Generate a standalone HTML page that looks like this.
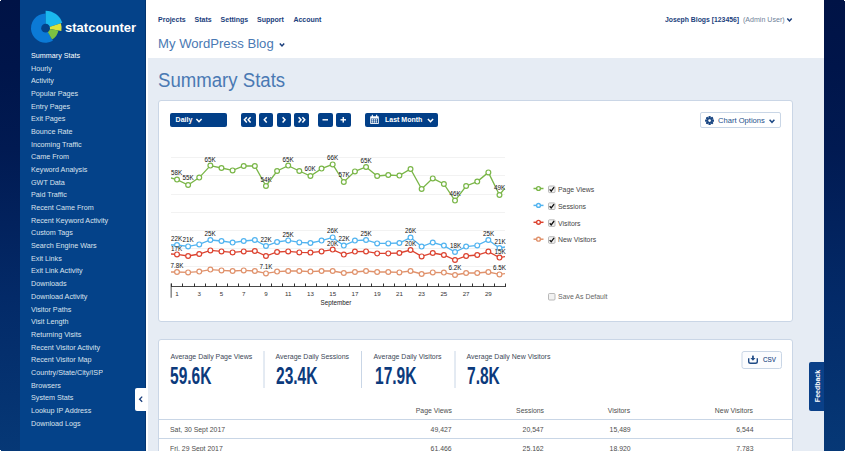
<!DOCTYPE html><html><head><meta charset="utf-8"><style>
html,body{margin:0;padding:0;width:845px;height:451px;overflow:hidden;background:#e6ecf4;}
body{position:relative;font-family:"Liberation Sans",sans-serif;}
.t{position:absolute;white-space:nowrap;font-family:"Liberation Sans",sans-serif;}
svg{overflow:visible}
</style></head><body>
<div style="position:absolute;left:0px;top:0px;width:20px;height:451px;background:linear-gradient(#001346 0%,#00154a 15%,#011a52 33%,#032a68 66%,#063876 100%);"></div>
<div style="position:absolute;left:824px;top:0px;width:21px;height:451px;background:linear-gradient(#001346 0%,#00154a 15%,#011a52 33%,#032a68 66%,#063876 100%);"></div>
<div style="position:absolute;left:20px;top:0px;width:126px;height:451px;background:#044289;"></div>
<div style="position:absolute;left:145px;top:0px;width:1px;height:451px;background:#03346f;"></div>
<div style="position:absolute;left:146px;top:0px;width:2px;height:451px;background:#ffffff;"></div>
<div style="position:absolute;left:147px;top:0px;width:677px;height:58px;background:#fff;"></div>
<div style="position:absolute;left:148px;top:58px;width:676px;height:393px;background:#e6ecf4;"></div>
<div class="t" style="left:31px;top:52.10px;font-size:7.6px;line-height:7.6px;color:#ffffff;transform:scaleX(0.947);transform-origin:left center;">Summary Stats</div>
<div class="t" style="left:31px;top:64.77px;font-size:7.6px;line-height:7.6px;color:#dbe3ee;transform:scaleX(0.947);transform-origin:left center;">Hourly</div>
<div class="t" style="left:31px;top:77.44px;font-size:7.6px;line-height:7.6px;color:#dbe3ee;transform:scaleX(0.947);transform-origin:left center;">Activity</div>
<div class="t" style="left:31px;top:90.11px;font-size:7.6px;line-height:7.6px;color:#dbe3ee;transform:scaleX(0.947);transform-origin:left center;">Popular Pages</div>
<div class="t" style="left:31px;top:102.78px;font-size:7.6px;line-height:7.6px;color:#dbe3ee;transform:scaleX(0.947);transform-origin:left center;">Entry Pages</div>
<div class="t" style="left:31px;top:115.45px;font-size:7.6px;line-height:7.6px;color:#dbe3ee;transform:scaleX(0.947);transform-origin:left center;">Exit Pages</div>
<div class="t" style="left:31px;top:128.12px;font-size:7.6px;line-height:7.6px;color:#dbe3ee;transform:scaleX(0.947);transform-origin:left center;">Bounce Rate</div>
<div class="t" style="left:31px;top:140.79px;font-size:7.6px;line-height:7.6px;color:#dbe3ee;transform:scaleX(0.947);transform-origin:left center;">Incoming Traffic</div>
<div class="t" style="left:31px;top:153.46px;font-size:7.6px;line-height:7.6px;color:#dbe3ee;transform:scaleX(0.947);transform-origin:left center;">Came From</div>
<div class="t" style="left:31px;top:166.13px;font-size:7.6px;line-height:7.6px;color:#dbe3ee;transform:scaleX(0.947);transform-origin:left center;">Keyword Analysis</div>
<div class="t" style="left:31px;top:178.80px;font-size:7.6px;line-height:7.6px;color:#dbe3ee;transform:scaleX(0.947);transform-origin:left center;">GWT Data</div>
<div class="t" style="left:31px;top:191.47px;font-size:7.6px;line-height:7.6px;color:#dbe3ee;transform:scaleX(0.947);transform-origin:left center;">Paid Traffic</div>
<div class="t" style="left:31px;top:204.14px;font-size:7.6px;line-height:7.6px;color:#dbe3ee;transform:scaleX(0.947);transform-origin:left center;">Recent Came From</div>
<div class="t" style="left:31px;top:216.81px;font-size:7.6px;line-height:7.6px;color:#dbe3ee;transform:scaleX(0.947);transform-origin:left center;">Recent Keyword Activity</div>
<div class="t" style="left:31px;top:229.48px;font-size:7.6px;line-height:7.6px;color:#dbe3ee;transform:scaleX(0.947);transform-origin:left center;">Custom Tags</div>
<div class="t" style="left:31px;top:242.15px;font-size:7.6px;line-height:7.6px;color:#dbe3ee;transform:scaleX(0.947);transform-origin:left center;">Search Engine Wars</div>
<div class="t" style="left:31px;top:254.82px;font-size:7.6px;line-height:7.6px;color:#dbe3ee;transform:scaleX(0.947);transform-origin:left center;">Exit Links</div>
<div class="t" style="left:31px;top:267.49px;font-size:7.6px;line-height:7.6px;color:#dbe3ee;transform:scaleX(0.947);transform-origin:left center;">Exit Link Activity</div>
<div class="t" style="left:31px;top:280.16px;font-size:7.6px;line-height:7.6px;color:#dbe3ee;transform:scaleX(0.947);transform-origin:left center;">Downloads</div>
<div class="t" style="left:31px;top:292.83px;font-size:7.6px;line-height:7.6px;color:#dbe3ee;transform:scaleX(0.947);transform-origin:left center;">Download Activity</div>
<div class="t" style="left:31px;top:305.50px;font-size:7.6px;line-height:7.6px;color:#dbe3ee;transform:scaleX(0.947);transform-origin:left center;">Visitor Paths</div>
<div class="t" style="left:31px;top:318.17px;font-size:7.6px;line-height:7.6px;color:#dbe3ee;transform:scaleX(0.947);transform-origin:left center;">Visit Length</div>
<div class="t" style="left:31px;top:330.84px;font-size:7.6px;line-height:7.6px;color:#dbe3ee;transform:scaleX(0.947);transform-origin:left center;">Returning Visits</div>
<div class="t" style="left:31px;top:343.51px;font-size:7.6px;line-height:7.6px;color:#dbe3ee;transform:scaleX(0.947);transform-origin:left center;">Recent Visitor Activity</div>
<div class="t" style="left:31px;top:356.18px;font-size:7.6px;line-height:7.6px;color:#dbe3ee;transform:scaleX(0.947);transform-origin:left center;">Recent Visitor Map</div>
<div class="t" style="left:31px;top:368.85px;font-size:7.6px;line-height:7.6px;color:#dbe3ee;transform:scaleX(0.947);transform-origin:left center;">Country/State/City/ISP</div>
<div class="t" style="left:31px;top:381.52px;font-size:7.6px;line-height:7.6px;color:#dbe3ee;transform:scaleX(0.947);transform-origin:left center;">Browsers</div>
<div class="t" style="left:31px;top:394.19px;font-size:7.6px;line-height:7.6px;color:#dbe3ee;transform:scaleX(0.947);transform-origin:left center;">System Stats</div>
<div class="t" style="left:31px;top:406.86px;font-size:7.6px;line-height:7.6px;color:#dbe3ee;transform:scaleX(0.947);transform-origin:left center;">Lookup IP Address</div>
<div class="t" style="left:31px;top:419.53px;font-size:7.6px;line-height:7.6px;color:#dbe3ee;transform:scaleX(0.947);transform-origin:left center;">Download Logs</div>
<svg style="position:absolute;left:0;top:0" width="845" height="451"><path d="M45.60,28.20 L52.90,40.84 A14.6,14.6 0 1 1 45.60,13.60 Z" fill="#0b7ad6"/><path d="M45.60,28.20 L45.60,10.70 A17.5,17.5 0 0 1 62.24,22.79 Z" fill="#1ab8ee"/><path d="M45.60,28.20 L60.82,23.26 A16,16 0 0 1 61.36,30.98 Z" fill="#dce33a"/><path d="M45.60,28.20 L58.40,30.46 A13,13 0 0 1 52.10,39.46 Z" fill="#7cc142"/><circle cx="45.6" cy="28.2" r="4.4" fill="#044289"/></svg>
<div class="t" style="left:65.2px;top:20.70px;font-size:13.6px;line-height:13.6px;color:#ffffff;font-weight:bold;transform:scaleX(0.96);transform-origin:left center;">statcounter</div>
<div class="t" style="left:158px;top:15.60px;font-size:7px;line-height:7px;color:#1a3e7c;font-weight:bold;">Projects</div>
<div class="t" style="left:194.6px;top:15.60px;font-size:7px;line-height:7px;color:#1a3e7c;font-weight:bold;">Stats</div>
<div class="t" style="left:220.6px;top:15.60px;font-size:7px;line-height:7px;color:#1a3e7c;font-weight:bold;">Settings</div>
<div class="t" style="left:257px;top:15.60px;font-size:7px;line-height:7px;color:#1a3e7c;font-weight:bold;">Support</div>
<div class="t" style="left:293.4px;top:15.60px;font-size:7px;line-height:7px;color:#1a3e7c;font-weight:bold;">Account</div>
<div class="t" style="left:665.2px;top:15.80px;font-size:7.6px;line-height:7.6px;color:#1a3e7c;font-weight:bold;transform:scaleX(0.9);transform-origin:left center;">Joseph Blogs [123456]</div>
<div class="t" style="left:743px;top:16.00px;font-size:7.6px;line-height:7.6px;color:#6f7f99;transform:scaleX(0.93);transform-origin:left center;">(Admin User)</div>
<div class="t" style="left:158px;top:36.55px;font-size:13.5px;line-height:13.5px;color:#4a79b3;transform:scaleX(0.972);transform-origin:left center;">My WordPress Blog</div>
<div class="t" style="left:158px;top:70.00px;font-size:20px;line-height:20px;color:#4a79b3;transform:scaleX(0.93);transform-origin:left center;">Summary Stats</div>
<div style="position:absolute;left:158px;top:100px;width:635px;height:222px;background:#fff;border:1px solid #cad6e6;border-radius:3px;box-sizing:border-box;"></div>
<div style="position:absolute;left:158px;top:339px;width:635px;height:121px;background:#fff;border:1px solid #cad6e6;border-radius:3px;box-sizing:border-box;"></div>
<div style="position:absolute;left:170px;top:112.5px;width:57px;height:14.5px;background:#023f88;border-radius:2px;"></div>
<div style="position:absolute;left:240.5px;top:112.5px;width:15.0px;height:14.5px;background:#023f88;border-radius:2px;"></div>
<div style="position:absolute;left:258.5px;top:112.5px;width:14.5px;height:14.5px;background:#023f88;border-radius:2px;"></div>
<div style="position:absolute;left:276.5px;top:112.5px;width:14.5px;height:14.5px;background:#023f88;border-radius:2px;"></div>
<div style="position:absolute;left:294px;top:112.5px;width:15px;height:14.5px;background:#023f88;border-radius:2px;"></div>
<div style="position:absolute;left:318px;top:112.5px;width:14.5px;height:14.5px;background:#023f88;border-radius:2px;"></div>
<div style="position:absolute;left:336px;top:112.5px;width:14.5px;height:14.5px;background:#023f88;border-radius:2px;"></div>
<div style="position:absolute;left:364.5px;top:112.5px;width:73.0px;height:14.5px;background:#023f88;border-radius:2px;"></div>
<div class="t" style="left:175.6px;top:116.20px;font-size:7px;line-height:7px;color:#fff;font-weight:bold;">Daily</div>
<div class="t" style="left:385px;top:116.20px;font-size:7px;line-height:7px;color:#fff;font-weight:bold;">Last Month</div>
<div style="position:absolute;left:700px;top:112px;width:81px;height:16px;background:#fff;border:1px solid #c9d6e6;border-radius:2px;box-sizing:border-box;"></div>
<div class="t" style="left:718px;top:117.20px;font-size:7.6px;line-height:7.6px;color:#24508c;transform:scaleX(1.0);transform-origin:left center;">Chart Options</div>
<svg style="position:absolute;left:0;top:0" width="845" height="451">
<polyline points="196.4,118.95 199,121.64999999999999 201.6,118.95" fill="none" stroke="#fff" stroke-width="1.5"/>
<polyline points="427.9,118.95 430.5,121.64999999999999 433.1,118.95" fill="none" stroke="#fff" stroke-width="1.5"/>
<polyline points="769.6,119.7 772,122.3 774.4,119.7" fill="none" stroke="#1e4a85" stroke-width="1.5"/>
<polyline points="279.8,43.599999999999994 282,46.0 284.2,43.599999999999994" fill="none" stroke="#1a3e7c" stroke-width="1.5"/>
<polyline points="787.3,18.6 789.5,21.0 791.7,18.6" fill="none" stroke="#1a3e7c" stroke-width="1.5"/>
<polyline points="246.79999999999998,117.2 244.4,119.8 246.79999999999998,122.39999999999999" fill="none" stroke="#fff" stroke-width="1.5"/>
<polyline points="250.6,117.2 248.20000000000002,119.8 250.6,122.39999999999999" fill="none" stroke="#fff" stroke-width="1.5"/>
<polyline points="266.7,117.2 264.3,119.8 266.7,122.39999999999999" fill="none" stroke="#fff" stroke-width="1.5"/>
<polyline points="282.6,117.2 285.0,119.8 282.6,122.39999999999999" fill="none" stroke="#fff" stroke-width="1.5"/>
<polyline points="298.6,117.2 301.0,119.8 298.6,122.39999999999999" fill="none" stroke="#fff" stroke-width="1.5"/>
<polyline points="302.40000000000003,117.2 304.8,119.8 302.40000000000003,122.39999999999999" fill="none" stroke="#fff" stroke-width="1.5"/>
<rect x="322.5" y="119.1" width="5.5" height="1.4" fill="#fff"/>
<rect x="340.5" y="119.1" width="5.5" height="1.4" fill="#fff"/><rect x="342.55" y="117.05" width="1.4" height="5.5" fill="#fff"/>
<rect x="370.2" y="116.3" width="8.6" height="7.6" rx="0.6" fill="#fff"/><rect x="371" y="118.6" width="7" height="4.5" fill="#023f88"/><rect x="371.8" y="114.8" width="1.1" height="2.2" fill="#fff"/><rect x="376.1" y="114.8" width="1.1" height="2.2" fill="#fff"/>
<rect x="371.5" y="119.2" width="1.5" height="1.4" fill="#fff"/>
<rect x="371.5" y="121.2" width="1.5" height="1.4" fill="#fff"/>
<rect x="373.6" y="119.2" width="1.5" height="1.4" fill="#fff"/>
<rect x="373.6" y="121.2" width="1.5" height="1.4" fill="#fff"/>
<rect x="375.7" y="119.2" width="1.5" height="1.4" fill="#fff"/>
<rect x="375.7" y="121.2" width="1.5" height="1.4" fill="#fff"/>
<rect x="708.7" y="116.19999999999999" width="1.8" height="8.8" fill="#1e4a85" transform="rotate(0 709.6 120.6)"/><rect x="708.7" y="116.19999999999999" width="1.8" height="8.8" fill="#1e4a85" transform="rotate(45 709.6 120.6)"/><rect x="708.7" y="116.19999999999999" width="1.8" height="8.8" fill="#1e4a85" transform="rotate(90 709.6 120.6)"/><rect x="708.7" y="116.19999999999999" width="1.8" height="8.8" fill="#1e4a85" transform="rotate(135 709.6 120.6)"/><rect x="708.7" y="116.19999999999999" width="1.8" height="8.8" fill="#1e4a85" transform="rotate(180 709.6 120.6)"/><rect x="708.7" y="116.19999999999999" width="1.8" height="8.8" fill="#1e4a85" transform="rotate(225 709.6 120.6)"/><rect x="708.7" y="116.19999999999999" width="1.8" height="8.8" fill="#1e4a85" transform="rotate(270 709.6 120.6)"/><rect x="708.7" y="116.19999999999999" width="1.8" height="8.8" fill="#1e4a85" transform="rotate(315 709.6 120.6)"/><circle cx="709.6" cy="120.6" r="3.0" fill="#1e4a85"/><circle cx="709.6" cy="120.6" r="1.3" fill="#fff"/>
<line x1="171" y1="157.5" x2="505" y2="157.5" stroke="#f2f2f2" stroke-width="1"/>
<line x1="171" y1="175.5" x2="505" y2="175.5" stroke="#f2f2f2" stroke-width="1"/>
<line x1="171" y1="194.5" x2="505" y2="194.5" stroke="#f2f2f2" stroke-width="1"/>
<line x1="171" y1="212.5" x2="505" y2="212.5" stroke="#f2f2f2" stroke-width="1"/>
<line x1="171" y1="230.5" x2="505" y2="230.5" stroke="#f2f2f2" stroke-width="1"/>
<line x1="171" y1="248.5" x2="505" y2="248.5" stroke="#f2f2f2" stroke-width="1"/>
<line x1="171" y1="266.5" x2="505" y2="266.5" stroke="#f2f2f2" stroke-width="1"/>
<defs><clipPath id="cp"><rect x="171" y="140" width="334" height="145"/></clipPath></defs><g clip-path="url(#cp)">
<polyline points="171.00,178.00 177.00,179.60 188.12,185.00 199.24,177.60 210.36,165.60 221.48,168.00 232.60,170.40 243.72,166.00 254.84,166.00 265.96,186.00 277.08,171.00 288.20,165.60 299.32,171.00 310.44,176.00 321.56,168.60 332.68,164.40 343.80,182.00 354.92,171.40 366.04,167.00 377.16,176.00 388.28,175.00 399.40,175.60 410.52,169.00 421.64,189.00 432.76,178.40 443.88,184.00 455.00,200.60 466.12,186.00 477.24,181.60 488.36,172.40 499.48,195.00 505.00,188.00" fill="none" stroke="#7ab648" stroke-width="1.3"/>
<polyline points="171.00,245.00 177.00,245.00 188.12,246.40 199.24,244.40 210.36,240.00 221.48,241.00 232.60,242.60 243.72,241.00 254.84,240.00 265.96,246.00 277.08,242.00 288.20,240.40 299.32,242.40 310.44,243.00 321.56,240.60 332.68,237.40 343.80,245.60 354.92,240.60 366.04,240.00 377.16,243.40 388.28,243.40 399.40,243.00 410.52,237.60 421.64,246.60 432.76,242.50 443.88,245.60 455.00,252.00 466.12,246.60 477.24,245.40 488.36,240.00 499.48,248.00 505.00,247.00" fill="none" stroke="#52b4f0" stroke-width="1.3"/>
<polyline points="171.00,254.00 177.00,254.40 188.12,256.00 199.24,254.00 210.36,250.40 221.48,251.40 232.60,252.40 243.72,251.40 254.84,251.00 265.96,256.00 277.08,252.00 288.20,251.40 299.32,252.40 310.44,252.60 321.56,251.40 332.68,249.60 343.80,254.60 354.92,251.60 366.04,251.40 377.16,253.40 388.28,253.40 399.40,253.00 410.52,250.00 421.64,256.40 432.76,253.00 443.88,255.00 455.00,260.00 466.12,256.00 477.24,255.00 488.36,251.60 499.48,257.60 505.00,256.60" fill="none" stroke="#dc4330" stroke-width="1.3"/>
<polyline points="171.00,272.00 177.00,272.00 188.12,272.40 199.24,271.60 210.36,269.60 221.48,270.40 232.60,271.00 243.72,270.40 254.84,271.00 265.96,273.40 277.08,271.60 288.20,271.00 299.32,271.00 310.44,271.60 321.56,271.00 332.68,271.00 343.80,273.00 354.92,272.00 366.04,271.00 377.16,272.00 388.28,272.00 399.40,272.40 410.52,271.00 421.64,274.00 432.76,272.40 443.88,272.60 455.00,275.00 466.12,273.00 477.24,273.00 488.36,272.00 499.48,274.40 505.00,273.60" fill="none" stroke="#e0926c" stroke-width="1.3"/>
</g>
<circle cx="177.00" cy="179.6" r="2.4" fill="#fff" stroke="#7ab648" stroke-width="1.2"/>
<circle cx="188.12" cy="185" r="2.4" fill="#fff" stroke="#7ab648" stroke-width="1.2"/>
<circle cx="199.24" cy="177.6" r="2.4" fill="#fff" stroke="#7ab648" stroke-width="1.2"/>
<circle cx="210.36" cy="165.6" r="2.4" fill="#fff" stroke="#7ab648" stroke-width="1.2"/>
<circle cx="221.48" cy="168" r="2.4" fill="#fff" stroke="#7ab648" stroke-width="1.2"/>
<circle cx="232.60" cy="170.4" r="2.4" fill="#fff" stroke="#7ab648" stroke-width="1.2"/>
<circle cx="243.72" cy="166" r="2.4" fill="#fff" stroke="#7ab648" stroke-width="1.2"/>
<circle cx="254.84" cy="166" r="2.4" fill="#fff" stroke="#7ab648" stroke-width="1.2"/>
<circle cx="265.96" cy="186" r="2.4" fill="#fff" stroke="#7ab648" stroke-width="1.2"/>
<circle cx="277.08" cy="171" r="2.4" fill="#fff" stroke="#7ab648" stroke-width="1.2"/>
<circle cx="288.20" cy="165.6" r="2.4" fill="#fff" stroke="#7ab648" stroke-width="1.2"/>
<circle cx="299.32" cy="171" r="2.4" fill="#fff" stroke="#7ab648" stroke-width="1.2"/>
<circle cx="310.44" cy="176" r="2.4" fill="#fff" stroke="#7ab648" stroke-width="1.2"/>
<circle cx="321.56" cy="168.6" r="2.4" fill="#fff" stroke="#7ab648" stroke-width="1.2"/>
<circle cx="332.68" cy="164.4" r="2.4" fill="#fff" stroke="#7ab648" stroke-width="1.2"/>
<circle cx="343.80" cy="182" r="2.4" fill="#fff" stroke="#7ab648" stroke-width="1.2"/>
<circle cx="354.92" cy="171.4" r="2.4" fill="#fff" stroke="#7ab648" stroke-width="1.2"/>
<circle cx="366.04" cy="167" r="2.4" fill="#fff" stroke="#7ab648" stroke-width="1.2"/>
<circle cx="377.16" cy="176" r="2.4" fill="#fff" stroke="#7ab648" stroke-width="1.2"/>
<circle cx="388.28" cy="175" r="2.4" fill="#fff" stroke="#7ab648" stroke-width="1.2"/>
<circle cx="399.40" cy="175.6" r="2.4" fill="#fff" stroke="#7ab648" stroke-width="1.2"/>
<circle cx="410.52" cy="169" r="2.4" fill="#fff" stroke="#7ab648" stroke-width="1.2"/>
<circle cx="421.64" cy="189" r="2.4" fill="#fff" stroke="#7ab648" stroke-width="1.2"/>
<circle cx="432.76" cy="178.4" r="2.4" fill="#fff" stroke="#7ab648" stroke-width="1.2"/>
<circle cx="443.88" cy="184" r="2.4" fill="#fff" stroke="#7ab648" stroke-width="1.2"/>
<circle cx="455.00" cy="200.6" r="2.4" fill="#fff" stroke="#7ab648" stroke-width="1.2"/>
<circle cx="466.12" cy="186" r="2.4" fill="#fff" stroke="#7ab648" stroke-width="1.2"/>
<circle cx="477.24" cy="181.6" r="2.4" fill="#fff" stroke="#7ab648" stroke-width="1.2"/>
<circle cx="488.36" cy="172.4" r="2.4" fill="#fff" stroke="#7ab648" stroke-width="1.2"/>
<circle cx="499.48" cy="195" r="2.4" fill="#fff" stroke="#7ab648" stroke-width="1.2"/>
<circle cx="177.00" cy="245" r="2.4" fill="#fff" stroke="#52b4f0" stroke-width="1.2"/>
<circle cx="188.12" cy="246.4" r="2.4" fill="#fff" stroke="#52b4f0" stroke-width="1.2"/>
<circle cx="199.24" cy="244.4" r="2.4" fill="#fff" stroke="#52b4f0" stroke-width="1.2"/>
<circle cx="210.36" cy="240" r="2.4" fill="#fff" stroke="#52b4f0" stroke-width="1.2"/>
<circle cx="221.48" cy="241" r="2.4" fill="#fff" stroke="#52b4f0" stroke-width="1.2"/>
<circle cx="232.60" cy="242.6" r="2.4" fill="#fff" stroke="#52b4f0" stroke-width="1.2"/>
<circle cx="243.72" cy="241" r="2.4" fill="#fff" stroke="#52b4f0" stroke-width="1.2"/>
<circle cx="254.84" cy="240" r="2.4" fill="#fff" stroke="#52b4f0" stroke-width="1.2"/>
<circle cx="265.96" cy="246" r="2.4" fill="#fff" stroke="#52b4f0" stroke-width="1.2"/>
<circle cx="277.08" cy="242" r="2.4" fill="#fff" stroke="#52b4f0" stroke-width="1.2"/>
<circle cx="288.20" cy="240.4" r="2.4" fill="#fff" stroke="#52b4f0" stroke-width="1.2"/>
<circle cx="299.32" cy="242.4" r="2.4" fill="#fff" stroke="#52b4f0" stroke-width="1.2"/>
<circle cx="310.44" cy="243" r="2.4" fill="#fff" stroke="#52b4f0" stroke-width="1.2"/>
<circle cx="321.56" cy="240.6" r="2.4" fill="#fff" stroke="#52b4f0" stroke-width="1.2"/>
<circle cx="332.68" cy="237.4" r="2.4" fill="#fff" stroke="#52b4f0" stroke-width="1.2"/>
<circle cx="343.80" cy="245.6" r="2.4" fill="#fff" stroke="#52b4f0" stroke-width="1.2"/>
<circle cx="354.92" cy="240.6" r="2.4" fill="#fff" stroke="#52b4f0" stroke-width="1.2"/>
<circle cx="366.04" cy="240" r="2.4" fill="#fff" stroke="#52b4f0" stroke-width="1.2"/>
<circle cx="377.16" cy="243.4" r="2.4" fill="#fff" stroke="#52b4f0" stroke-width="1.2"/>
<circle cx="388.28" cy="243.4" r="2.4" fill="#fff" stroke="#52b4f0" stroke-width="1.2"/>
<circle cx="399.40" cy="243" r="2.4" fill="#fff" stroke="#52b4f0" stroke-width="1.2"/>
<circle cx="410.52" cy="237.6" r="2.4" fill="#fff" stroke="#52b4f0" stroke-width="1.2"/>
<circle cx="421.64" cy="246.6" r="2.4" fill="#fff" stroke="#52b4f0" stroke-width="1.2"/>
<circle cx="432.76" cy="242.5" r="2.4" fill="#fff" stroke="#52b4f0" stroke-width="1.2"/>
<circle cx="443.88" cy="245.6" r="2.4" fill="#fff" stroke="#52b4f0" stroke-width="1.2"/>
<circle cx="455.00" cy="252" r="2.4" fill="#fff" stroke="#52b4f0" stroke-width="1.2"/>
<circle cx="466.12" cy="246.6" r="2.4" fill="#fff" stroke="#52b4f0" stroke-width="1.2"/>
<circle cx="477.24" cy="245.4" r="2.4" fill="#fff" stroke="#52b4f0" stroke-width="1.2"/>
<circle cx="488.36" cy="240" r="2.4" fill="#fff" stroke="#52b4f0" stroke-width="1.2"/>
<circle cx="499.48" cy="248" r="2.4" fill="#fff" stroke="#52b4f0" stroke-width="1.2"/>
<circle cx="177.00" cy="254.4" r="2.4" fill="#fff" stroke="#dc4330" stroke-width="1.2"/>
<circle cx="188.12" cy="256" r="2.4" fill="#fff" stroke="#dc4330" stroke-width="1.2"/>
<circle cx="199.24" cy="254" r="2.4" fill="#fff" stroke="#dc4330" stroke-width="1.2"/>
<circle cx="210.36" cy="250.4" r="2.4" fill="#fff" stroke="#dc4330" stroke-width="1.2"/>
<circle cx="221.48" cy="251.4" r="2.4" fill="#fff" stroke="#dc4330" stroke-width="1.2"/>
<circle cx="232.60" cy="252.4" r="2.4" fill="#fff" stroke="#dc4330" stroke-width="1.2"/>
<circle cx="243.72" cy="251.4" r="2.4" fill="#fff" stroke="#dc4330" stroke-width="1.2"/>
<circle cx="254.84" cy="251" r="2.4" fill="#fff" stroke="#dc4330" stroke-width="1.2"/>
<circle cx="265.96" cy="256" r="2.4" fill="#fff" stroke="#dc4330" stroke-width="1.2"/>
<circle cx="277.08" cy="252" r="2.4" fill="#fff" stroke="#dc4330" stroke-width="1.2"/>
<circle cx="288.20" cy="251.4" r="2.4" fill="#fff" stroke="#dc4330" stroke-width="1.2"/>
<circle cx="299.32" cy="252.4" r="2.4" fill="#fff" stroke="#dc4330" stroke-width="1.2"/>
<circle cx="310.44" cy="252.6" r="2.4" fill="#fff" stroke="#dc4330" stroke-width="1.2"/>
<circle cx="321.56" cy="251.4" r="2.4" fill="#fff" stroke="#dc4330" stroke-width="1.2"/>
<circle cx="332.68" cy="249.6" r="2.4" fill="#fff" stroke="#dc4330" stroke-width="1.2"/>
<circle cx="343.80" cy="254.6" r="2.4" fill="#fff" stroke="#dc4330" stroke-width="1.2"/>
<circle cx="354.92" cy="251.6" r="2.4" fill="#fff" stroke="#dc4330" stroke-width="1.2"/>
<circle cx="366.04" cy="251.4" r="2.4" fill="#fff" stroke="#dc4330" stroke-width="1.2"/>
<circle cx="377.16" cy="253.4" r="2.4" fill="#fff" stroke="#dc4330" stroke-width="1.2"/>
<circle cx="388.28" cy="253.4" r="2.4" fill="#fff" stroke="#dc4330" stroke-width="1.2"/>
<circle cx="399.40" cy="253" r="2.4" fill="#fff" stroke="#dc4330" stroke-width="1.2"/>
<circle cx="410.52" cy="250" r="2.4" fill="#fff" stroke="#dc4330" stroke-width="1.2"/>
<circle cx="421.64" cy="256.4" r="2.4" fill="#fff" stroke="#dc4330" stroke-width="1.2"/>
<circle cx="432.76" cy="253" r="2.4" fill="#fff" stroke="#dc4330" stroke-width="1.2"/>
<circle cx="443.88" cy="255" r="2.4" fill="#fff" stroke="#dc4330" stroke-width="1.2"/>
<circle cx="455.00" cy="260" r="2.4" fill="#fff" stroke="#dc4330" stroke-width="1.2"/>
<circle cx="466.12" cy="256" r="2.4" fill="#fff" stroke="#dc4330" stroke-width="1.2"/>
<circle cx="477.24" cy="255" r="2.4" fill="#fff" stroke="#dc4330" stroke-width="1.2"/>
<circle cx="488.36" cy="251.6" r="2.4" fill="#fff" stroke="#dc4330" stroke-width="1.2"/>
<circle cx="499.48" cy="257.6" r="2.4" fill="#fff" stroke="#dc4330" stroke-width="1.2"/>
<circle cx="177.00" cy="272" r="2.4" fill="#fff" stroke="#e0926c" stroke-width="1.2"/>
<circle cx="188.12" cy="272.4" r="2.4" fill="#fff" stroke="#e0926c" stroke-width="1.2"/>
<circle cx="199.24" cy="271.6" r="2.4" fill="#fff" stroke="#e0926c" stroke-width="1.2"/>
<circle cx="210.36" cy="269.6" r="2.4" fill="#fff" stroke="#e0926c" stroke-width="1.2"/>
<circle cx="221.48" cy="270.4" r="2.4" fill="#fff" stroke="#e0926c" stroke-width="1.2"/>
<circle cx="232.60" cy="271" r="2.4" fill="#fff" stroke="#e0926c" stroke-width="1.2"/>
<circle cx="243.72" cy="270.4" r="2.4" fill="#fff" stroke="#e0926c" stroke-width="1.2"/>
<circle cx="254.84" cy="271" r="2.4" fill="#fff" stroke="#e0926c" stroke-width="1.2"/>
<circle cx="265.96" cy="273.4" r="2.4" fill="#fff" stroke="#e0926c" stroke-width="1.2"/>
<circle cx="277.08" cy="271.6" r="2.4" fill="#fff" stroke="#e0926c" stroke-width="1.2"/>
<circle cx="288.20" cy="271" r="2.4" fill="#fff" stroke="#e0926c" stroke-width="1.2"/>
<circle cx="299.32" cy="271" r="2.4" fill="#fff" stroke="#e0926c" stroke-width="1.2"/>
<circle cx="310.44" cy="271.6" r="2.4" fill="#fff" stroke="#e0926c" stroke-width="1.2"/>
<circle cx="321.56" cy="271" r="2.4" fill="#fff" stroke="#e0926c" stroke-width="1.2"/>
<circle cx="332.68" cy="271" r="2.4" fill="#fff" stroke="#e0926c" stroke-width="1.2"/>
<circle cx="343.80" cy="273" r="2.4" fill="#fff" stroke="#e0926c" stroke-width="1.2"/>
<circle cx="354.92" cy="272" r="2.4" fill="#fff" stroke="#e0926c" stroke-width="1.2"/>
<circle cx="366.04" cy="271" r="2.4" fill="#fff" stroke="#e0926c" stroke-width="1.2"/>
<circle cx="377.16" cy="272" r="2.4" fill="#fff" stroke="#e0926c" stroke-width="1.2"/>
<circle cx="388.28" cy="272" r="2.4" fill="#fff" stroke="#e0926c" stroke-width="1.2"/>
<circle cx="399.40" cy="272.4" r="2.4" fill="#fff" stroke="#e0926c" stroke-width="1.2"/>
<circle cx="410.52" cy="271" r="2.4" fill="#fff" stroke="#e0926c" stroke-width="1.2"/>
<circle cx="421.64" cy="274" r="2.4" fill="#fff" stroke="#e0926c" stroke-width="1.2"/>
<circle cx="432.76" cy="272.4" r="2.4" fill="#fff" stroke="#e0926c" stroke-width="1.2"/>
<circle cx="443.88" cy="272.6" r="2.4" fill="#fff" stroke="#e0926c" stroke-width="1.2"/>
<circle cx="455.00" cy="275" r="2.4" fill="#fff" stroke="#e0926c" stroke-width="1.2"/>
<circle cx="466.12" cy="273" r="2.4" fill="#fff" stroke="#e0926c" stroke-width="1.2"/>
<circle cx="477.24" cy="273" r="2.4" fill="#fff" stroke="#e0926c" stroke-width="1.2"/>
<circle cx="488.36" cy="272" r="2.4" fill="#fff" stroke="#e0926c" stroke-width="1.2"/>
<circle cx="499.48" cy="274.4" r="2.4" fill="#fff" stroke="#e0926c" stroke-width="1.2"/>
<line x1="171" y1="286.5" x2="505" y2="286.5" stroke="#4a4a4a" stroke-width="1"/>
<line x1="171.2" y1="283.5" x2="171.2" y2="297.8" stroke="#8a8a8a" stroke-width="1.5"/>
<line x1="171.5" y1="283.5" x2="171.5" y2="287" stroke="#333" stroke-width="1"/>
<line x1="182.5" y1="283.5" x2="182.5" y2="287" stroke="#333" stroke-width="1"/>
<line x1="194.5" y1="283.5" x2="194.5" y2="287" stroke="#333" stroke-width="1"/>
<line x1="205.5" y1="283.5" x2="205.5" y2="287" stroke="#333" stroke-width="1"/>
<line x1="216.5" y1="283.5" x2="216.5" y2="287" stroke="#333" stroke-width="1"/>
<line x1="227.5" y1="283.5" x2="227.5" y2="287" stroke="#333" stroke-width="1"/>
<line x1="238.5" y1="283.5" x2="238.5" y2="287" stroke="#333" stroke-width="1"/>
<line x1="249.5" y1="283.5" x2="249.5" y2="287" stroke="#333" stroke-width="1"/>
<line x1="260.5" y1="283.5" x2="260.5" y2="287" stroke="#333" stroke-width="1"/>
<line x1="271.5" y1="283.5" x2="271.5" y2="287" stroke="#333" stroke-width="1"/>
<line x1="282.5" y1="283.5" x2="282.5" y2="287" stroke="#333" stroke-width="1"/>
<line x1="294.5" y1="283.5" x2="294.5" y2="287" stroke="#333" stroke-width="1"/>
<line x1="305.5" y1="283.5" x2="305.5" y2="287" stroke="#333" stroke-width="1"/>
<line x1="316.5" y1="283.5" x2="316.5" y2="287" stroke="#333" stroke-width="1"/>
<line x1="327.5" y1="283.5" x2="327.5" y2="287" stroke="#333" stroke-width="1"/>
<line x1="338.5" y1="283.5" x2="338.5" y2="287" stroke="#333" stroke-width="1"/>
<line x1="349.5" y1="283.5" x2="349.5" y2="287" stroke="#333" stroke-width="1"/>
<line x1="360.5" y1="283.5" x2="360.5" y2="287" stroke="#333" stroke-width="1"/>
<line x1="371.5" y1="283.5" x2="371.5" y2="287" stroke="#333" stroke-width="1"/>
<line x1="383.5" y1="283.5" x2="383.5" y2="287" stroke="#333" stroke-width="1"/>
<line x1="394.5" y1="283.5" x2="394.5" y2="287" stroke="#333" stroke-width="1"/>
<line x1="405.5" y1="283.5" x2="405.5" y2="287" stroke="#333" stroke-width="1"/>
<line x1="416.5" y1="283.5" x2="416.5" y2="287" stroke="#333" stroke-width="1"/>
<line x1="427.5" y1="283.5" x2="427.5" y2="287" stroke="#333" stroke-width="1"/>
<line x1="438.5" y1="283.5" x2="438.5" y2="287" stroke="#333" stroke-width="1"/>
<line x1="449.5" y1="283.5" x2="449.5" y2="287" stroke="#333" stroke-width="1"/>
<line x1="460.5" y1="283.5" x2="460.5" y2="287" stroke="#333" stroke-width="1"/>
<line x1="472.5" y1="283.5" x2="472.5" y2="287" stroke="#333" stroke-width="1"/>
<line x1="483.5" y1="283.5" x2="483.5" y2="287" stroke="#333" stroke-width="1"/>
<line x1="494.5" y1="283.5" x2="494.5" y2="287" stroke="#333" stroke-width="1"/>
<line x1="505.5" y1="283.5" x2="505.5" y2="287" stroke="#333" stroke-width="1"/>
<line x1="533.5" y1="188.5" x2="543.5" y2="188.5" stroke="#7ab648" stroke-width="1.5"/><circle cx="538.5" cy="188.5" r="1.9" fill="#fff" stroke="#7ab648" stroke-width="1.4"/>
<rect x="548.5" y="186.0" width="6.5" height="6.6" rx="1" fill="#f2f2f2" stroke="#a8a8a8" stroke-width="0.8"/>
<polyline points="549.7,189.4 551.2,191.1 554.1,187.2" fill="none" stroke="#111" stroke-width="1.3"/>
<line x1="533.5" y1="205.4" x2="543.5" y2="205.4" stroke="#52b4f0" stroke-width="1.5"/><circle cx="538.5" cy="205.4" r="1.9" fill="#fff" stroke="#52b4f0" stroke-width="1.4"/>
<rect x="548.5" y="202.9" width="6.5" height="6.6" rx="1" fill="#f2f2f2" stroke="#a8a8a8" stroke-width="0.8"/>
<polyline points="549.7,206.3 551.2,208.0 554.1,204.1" fill="none" stroke="#111" stroke-width="1.3"/>
<line x1="533.5" y1="222.3" x2="543.5" y2="222.3" stroke="#dc4330" stroke-width="1.5"/><circle cx="538.5" cy="222.3" r="1.9" fill="#fff" stroke="#dc4330" stroke-width="1.4"/>
<rect x="548.5" y="219.8" width="6.5" height="6.6" rx="1" fill="#f2f2f2" stroke="#a8a8a8" stroke-width="0.8"/>
<polyline points="549.7,223.20000000000002 551.2,224.9 554.1,221.0" fill="none" stroke="#111" stroke-width="1.3"/>
<line x1="533.5" y1="239.2" x2="543.5" y2="239.2" stroke="#e0926c" stroke-width="1.5"/><circle cx="538.5" cy="239.2" r="1.9" fill="#fff" stroke="#e0926c" stroke-width="1.4"/>
<rect x="548.5" y="236.7" width="6.5" height="6.6" rx="1" fill="#f2f2f2" stroke="#a8a8a8" stroke-width="0.8"/>
<polyline points="549.7,240.1 551.2,241.79999999999998 554.1,237.89999999999998" fill="none" stroke="#111" stroke-width="1.3"/>
<rect x="548.5" y="293.5" width="6.5" height="6.5" rx="1" fill="#f2f2f2" stroke="#a8a8a8" stroke-width="0.8"/>
<rect x="742" y="351.5" width="39.5" height="17" rx="2" fill="#fbfcfe" stroke="#c9d6e6" stroke-width="1"/>
<path d="M748.7,358.3 v3.2 q0,1.8 1.8,1.8 h5 q1.8,0 1.8,-1.8 v-3.2" fill="none" stroke="#1e4a85" stroke-width="1.4"/><rect x="752.1" y="355.6" width="1.7" height="3" fill="#1e4a85"/><path d="M750.4,358.1 h5.1 l-2.55,2.7 z" fill="#1e4a85"/>
<line x1="264" y1="351" x2="264" y2="388" stroke="#c9d6e6" stroke-width="1"/>
<line x1="361.5" y1="351" x2="361.5" y2="388" stroke="#c9d6e6" stroke-width="1"/>
<line x1="455" y1="351" x2="455" y2="388" stroke="#c9d6e6" stroke-width="1"/>
<line x1="158" y1="419.5" x2="793" y2="419.5" stroke="#c9d6e6" stroke-width="1"/>
<line x1="158" y1="438.5" x2="793" y2="438.5" stroke="#c9d6e6" stroke-width="1"/>
</svg>
<div class="t" style="left:171px;top:170.35px;font-size:6.3px;line-height:6.3px;color:#111;text-shadow:0 0 1px #fff;">58K</div>
<div class="t" style="left:182.4px;top:175.35px;font-size:6.3px;line-height:6.3px;color:#111;text-shadow:0 0 1px #fff;">55K</div>
<div class="t" style="left:204.6px;top:156.75px;font-size:6.3px;line-height:6.3px;color:#111;text-shadow:0 0 1px #fff;">65K</div>
<div class="t" style="left:260.6px;top:176.95px;font-size:6.3px;line-height:6.3px;color:#111;text-shadow:0 0 1px #fff;">54K</div>
<div class="t" style="left:282.4px;top:156.75px;font-size:6.3px;line-height:6.3px;color:#111;text-shadow:0 0 1px #fff;">65K</div>
<div class="t" style="left:304.6px;top:166.35px;font-size:6.3px;line-height:6.3px;color:#111;text-shadow:0 0 1px #fff;">60K</div>
<div class="t" style="left:327px;top:154.95px;font-size:6.3px;line-height:6.3px;color:#111;text-shadow:0 0 1px #fff;">66K</div>
<div class="t" style="left:338.4px;top:172.35px;font-size:6.3px;line-height:6.3px;color:#111;text-shadow:0 0 1px #fff;">57K</div>
<div class="t" style="left:360.4px;top:157.75px;font-size:6.3px;line-height:6.3px;color:#111;text-shadow:0 0 1px #fff;">65K</div>
<div class="t" style="left:449.6px;top:191.35px;font-size:6.3px;line-height:6.3px;color:#111;text-shadow:0 0 1px #fff;">46K</div>
<div class="t" style="left:494px;top:185.35px;font-size:6.3px;line-height:6.3px;color:#111;text-shadow:0 0 1px #fff;">49K</div>
<div class="t" style="left:171px;top:235.75px;font-size:6.3px;line-height:6.3px;color:#111;text-shadow:0 0 1px #fff;">22K</div>
<div class="t" style="left:182.6px;top:237.35px;font-size:6.3px;line-height:6.3px;color:#111;text-shadow:0 0 1px #fff;">21K</div>
<div class="t" style="left:204.6px;top:230.95px;font-size:6.3px;line-height:6.3px;color:#111;text-shadow:0 0 1px #fff;">25K</div>
<div class="t" style="left:260.6px;top:236.75px;font-size:6.3px;line-height:6.3px;color:#111;text-shadow:0 0 1px #fff;">22K</div>
<div class="t" style="left:282.4px;top:231.75px;font-size:6.3px;line-height:6.3px;color:#111;text-shadow:0 0 1px #fff;">25K</div>
<div class="t" style="left:327px;top:227.75px;font-size:6.3px;line-height:6.3px;color:#111;text-shadow:0 0 1px #fff;">26K</div>
<div class="t" style="left:338.4px;top:236.35px;font-size:6.3px;line-height:6.3px;color:#111;text-shadow:0 0 1px #fff;">22K</div>
<div class="t" style="left:360.4px;top:230.95px;font-size:6.3px;line-height:6.3px;color:#111;text-shadow:0 0 1px #fff;">25K</div>
<div class="t" style="left:405px;top:228.35px;font-size:6.3px;line-height:6.3px;color:#111;text-shadow:0 0 1px #fff;">26K</div>
<div class="t" style="left:450px;top:242.95px;font-size:6.3px;line-height:6.3px;color:#111;text-shadow:0 0 1px #fff;">18K</div>
<div class="t" style="left:483px;top:230.75px;font-size:6.3px;line-height:6.3px;color:#111;text-shadow:0 0 1px #fff;">25K</div>
<div class="t" style="left:494.4px;top:238.95px;font-size:6.3px;line-height:6.3px;color:#111;text-shadow:0 0 1px #fff;">21K</div>
<div class="t" style="left:171px;top:245.95px;font-size:6.3px;line-height:6.3px;color:#111;text-shadow:0 0 1px #fff;">17K</div>
<div class="t" style="left:327px;top:241.35px;font-size:6.3px;line-height:6.3px;color:#111;text-shadow:0 0 1px #fff;">20K</div>
<div class="t" style="left:405px;top:241.35px;font-size:6.3px;line-height:6.3px;color:#111;text-shadow:0 0 1px #fff;">20K</div>
<div class="t" style="left:494.4px;top:248.95px;font-size:6.3px;line-height:6.3px;color:#111;text-shadow:0 0 1px #fff;">15K</div>
<div class="t" style="left:170.4px;top:262.95px;font-size:6.3px;line-height:6.3px;color:#111;text-shadow:0 0 1px #fff;">7.8K</div>
<div class="t" style="left:259.6px;top:263.95px;font-size:6.3px;line-height:6.3px;color:#111;text-shadow:0 0 1px #fff;">7.1K</div>
<div class="t" style="left:448.4px;top:265.35px;font-size:6.3px;line-height:6.3px;color:#111;text-shadow:0 0 1px #fff;">6.2K</div>
<div class="t" style="left:493px;top:264.95px;font-size:6.3px;line-height:6.3px;color:#111;text-shadow:0 0 1px #fff;">6.5K</div>
<div class="t" style="left:177.0px;transform:translateX(-50%);top:291.30px;font-size:6.2px;line-height:6.2px;color:#333;">1</div>
<div class="t" style="left:199.24px;transform:translateX(-50%);top:291.30px;font-size:6.2px;line-height:6.2px;color:#333;">3</div>
<div class="t" style="left:221.48px;transform:translateX(-50%);top:291.30px;font-size:6.2px;line-height:6.2px;color:#333;">5</div>
<div class="t" style="left:243.72px;transform:translateX(-50%);top:291.30px;font-size:6.2px;line-height:6.2px;color:#333;">7</div>
<div class="t" style="left:265.96px;transform:translateX(-50%);top:291.30px;font-size:6.2px;line-height:6.2px;color:#333;">9</div>
<div class="t" style="left:288.2px;transform:translateX(-50%);top:291.30px;font-size:6.2px;line-height:6.2px;color:#333;">11</div>
<div class="t" style="left:310.44px;transform:translateX(-50%);top:291.30px;font-size:6.2px;line-height:6.2px;color:#333;">13</div>
<div class="t" style="left:332.67999999999995px;transform:translateX(-50%);top:291.30px;font-size:6.2px;line-height:6.2px;color:#333;">15</div>
<div class="t" style="left:354.91999999999996px;transform:translateX(-50%);top:291.30px;font-size:6.2px;line-height:6.2px;color:#333;">17</div>
<div class="t" style="left:377.15999999999997px;transform:translateX(-50%);top:291.30px;font-size:6.2px;line-height:6.2px;color:#333;">19</div>
<div class="t" style="left:399.4px;transform:translateX(-50%);top:291.30px;font-size:6.2px;line-height:6.2px;color:#333;">21</div>
<div class="t" style="left:421.64px;transform:translateX(-50%);top:291.30px;font-size:6.2px;line-height:6.2px;color:#333;">23</div>
<div class="t" style="left:443.88px;transform:translateX(-50%);top:291.30px;font-size:6.2px;line-height:6.2px;color:#333;">25</div>
<div class="t" style="left:466.12px;transform:translateX(-50%);top:291.30px;font-size:6.2px;line-height:6.2px;color:#333;">27</div>
<div class="t" style="left:488.35999999999996px;transform:translateX(-50%);top:291.30px;font-size:6.2px;line-height:6.2px;color:#333;">29</div>
<div class="t" style="left:336px;transform:translateX(-50%);top:300.25px;font-size:6.3px;line-height:6.3px;color:#222;">September</div>
<div class="t" style="left:558px;top:186.75px;font-size:6.9px;line-height:6.9px;color:#444;">Page Views</div>
<div class="t" style="left:558px;top:203.65px;font-size:6.9px;line-height:6.9px;color:#444;">Sessions</div>
<div class="t" style="left:558px;top:220.55px;font-size:6.9px;line-height:6.9px;color:#444;">Visitors</div>
<div class="t" style="left:558px;top:237.45px;font-size:6.9px;line-height:6.9px;color:#444;">New Visitors</div>
<div class="t" style="left:558px;top:293.52px;font-size:6.95px;line-height:6.95px;color:#666;">Save As Default</div>
<div class="t" style="left:170.4px;top:353.31px;font-size:6.98px;line-height:6.98px;color:#3d4757;">Average Daily Page Views</div>
<div class="t" style="left:275.6px;top:353.31px;font-size:6.98px;line-height:6.98px;color:#3d4757;">Average Daily Sessions</div>
<div class="t" style="left:373.6px;top:353.31px;font-size:6.98px;line-height:6.98px;color:#3d4757;">Average Daily Visitors</div>
<div class="t" style="left:466.6px;top:353.31px;font-size:6.98px;line-height:6.98px;color:#3d4757;">Average Daily New Visitors</div>
<div class="t" style="left:170.4px;top:364.60px;font-size:23px;line-height:23px;color:#0c3a7c;font-weight:bold;transform:scaleX(0.675);transform-origin:left center;">59.6K</div>
<div class="t" style="left:275.6px;top:364.60px;font-size:23px;line-height:23px;color:#0c3a7c;font-weight:bold;transform:scaleX(0.675);transform-origin:left center;">23.4K</div>
<div class="t" style="left:375px;top:364.60px;font-size:23px;line-height:23px;color:#0c3a7c;font-weight:bold;transform:scaleX(0.675);transform-origin:left center;">17.9K</div>
<div class="t" style="left:466.6px;top:364.60px;font-size:23px;line-height:23px;color:#0c3a7c;font-weight:bold;transform:scaleX(0.675);transform-origin:left center;">7.8K</div>
<div class="t" style="left:763px;top:356.20px;font-size:7.8px;line-height:7.8px;color:#1e4a85;transform:scaleX(0.8);transform-origin:left center;-webkit-text-stroke:0.15px #1e4a85;">CSV</div>
<div style="position:absolute;left:809.3px;top:361.7px;width:14.700000000000045px;height:49.30000000000001px;background:#0a4088;border-radius:2px 0 0 2px;"></div>
<div class="t" style="left:816.6px;top:386.3px;font-size:7px;line-height:7px;color:#fff;font-weight:bold;transform:translate(-50%,-50%) rotate(-90deg);">Feedback</div>
<div class="t" style="right:393.6px;top:407.10px;font-size:7.4px;line-height:7.4px;color:#4d4d4d;transform:scaleX(0.93);transform-origin:right center;">Page Views</div>
<div class="t" style="right:301px;top:407.10px;font-size:7.4px;line-height:7.4px;color:#4d4d4d;transform:scaleX(0.93);transform-origin:right center;">Sessions</div>
<div class="t" style="right:214.60000000000002px;top:407.10px;font-size:7.4px;line-height:7.4px;color:#4d4d4d;transform:scaleX(0.93);transform-origin:right center;">Visitors</div>
<div class="t" style="right:92px;top:407.10px;font-size:7.4px;line-height:7.4px;color:#4d4d4d;transform:scaleX(0.93);transform-origin:right center;">New Visitors</div>
<div class="t" style="left:170px;top:426.10px;font-size:7.4px;line-height:7.4px;color:#4d4d4d;transform:scaleX(0.93);transform-origin:left center;">Sat, 30 Sept 2017</div>
<div class="t" style="left:170px;top:445.10px;font-size:7.4px;line-height:7.4px;color:#4d4d4d;transform:scaleX(0.93);transform-origin:left center;">Fri, 29 Sept 2017</div>
<div class="t" style="right:393.6px;top:426.10px;font-size:7.4px;line-height:7.4px;color:#4d4d4d;transform:scaleX(0.93);transform-origin:right center;">49,427</div>
<div class="t" style="right:393.6px;top:445.10px;font-size:7.4px;line-height:7.4px;color:#4d4d4d;transform:scaleX(0.93);transform-origin:right center;">61,466</div>
<div class="t" style="right:301px;top:426.10px;font-size:7.4px;line-height:7.4px;color:#4d4d4d;transform:scaleX(0.93);transform-origin:right center;">20,547</div>
<div class="t" style="right:301px;top:445.10px;font-size:7.4px;line-height:7.4px;color:#4d4d4d;transform:scaleX(0.93);transform-origin:right center;">25,162</div>
<div class="t" style="right:214.60000000000002px;top:426.10px;font-size:7.4px;line-height:7.4px;color:#4d4d4d;transform:scaleX(0.93);transform-origin:right center;">15,489</div>
<div class="t" style="right:214.60000000000002px;top:445.10px;font-size:7.4px;line-height:7.4px;color:#4d4d4d;transform:scaleX(0.93);transform-origin:right center;">18,920</div>
<div class="t" style="right:92px;top:426.10px;font-size:7.4px;line-height:7.4px;color:#4d4d4d;transform:scaleX(0.93);transform-origin:right center;">6,544</div>
<div class="t" style="right:92px;top:445.10px;font-size:7.4px;line-height:7.4px;color:#4d4d4d;transform:scaleX(0.93);transform-origin:right center;">7,783</div>
<div style="position:absolute;left:0px;top:0px;width:1px;height:1px;background:#fff;"></div>
<div style="position:absolute;left:844px;top:0px;width:1px;height:1px;background:#fff;"></div>
<div style="position:absolute;left:0px;top:450px;width:1px;height:1px;background:#fff;"></div>
<div style="position:absolute;left:844px;top:450px;width:1px;height:1px;background:#fff;"></div>
<div style="position:absolute;left:135px;top:388px;width:12px;height:23px;background:#fff;border-radius:2px 0 0 2px;"></div>
<svg style="position:absolute;left:0;top:0" width="845" height="451"><polyline points="142.2,396.6 139.6,399.2 142.2,401.8" fill="none" stroke="#1a3e7c" stroke-width="1.3"/></svg>
</body></html>
